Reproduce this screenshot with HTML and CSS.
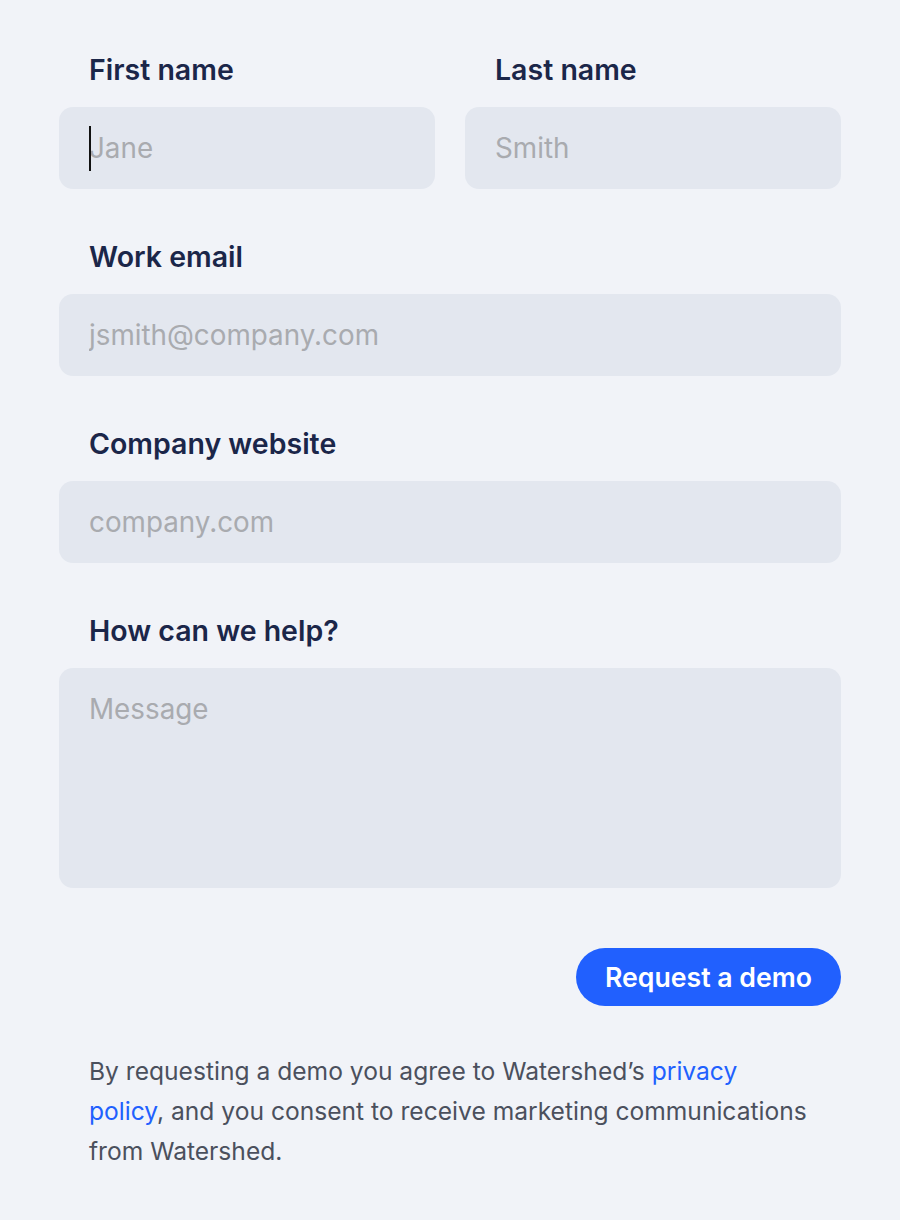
FILE: index.html
```html
<!DOCTYPE html>
<html lang="en">
<head>
<meta charset="utf-8">
<title>Request a demo</title>
<link rel="stylesheet" href="styles.css">
</head>
<body>
<form class="form">
  <div class="row">
    <div class="field">
      <label class="label" for="fn">First name</label>
      <div class="input-wrap">
        <input class="input" id="fn" type="text" placeholder="Jane">
        <span class="caret"></span>
      </div>
    </div>
    <div class="field">
      <label class="label" for="ln">Last name</label>
      <input class="input" id="ln" type="text" placeholder="Smith">
    </div>
  </div>
  <div class="field">
    <label class="label" for="em">Work email</label>
    <input class="input" id="em" type="email" placeholder="jsmith@company.com">
  </div>
  <div class="field">
    <label class="label" for="web">Company website</label>
    <input class="input" id="web" type="text" placeholder="company.com">
  </div>
  <div class="field">
    <label class="label" for="msg">How can we help?</label>
    <textarea class="input textarea" id="msg" placeholder="Message"></textarea>
  </div>
  <div class="actions">
    <button class="button" type="button">Request a demo</button>
  </div>
  <p class="legal">By requesting a demo you agree to Watershed’s <a class="link" href="#">privacy policy</a>, and you consent to receive marketing communications from Watershed.</p>
</form>
</body>
</html>
```
FILE: styles.css
```css
* { box-sizing: border-box; }
html, body {
  margin: 0;
  background: #f1f3f8;
}
body {
  font-family: Inter, "Noto Sans", "Liberation Sans", sans-serif;
}
.form {
  padding: 53px 59px 40px;
  display: flex;
  flex-direction: column;
}
.row {
  display: grid;
  grid-template-columns: 1fr 1fr;
  column-gap: 30px;
}
.field {
  display: flex;
  flex-direction: column;
  margin-bottom: 51px;
}
.label {
  display: block;
  padding-left: 30px;
  font-size: 28.5px;
  line-height: 34px;
  font-weight: 600;
  color: #1b2649;
  margin-bottom: 20px;
}
.input-wrap { position: relative; }
.input {
  display: block;
  width: 100%;
  height: 82px;
  border: none;
  outline: none;
  border-radius: 14px;
  background: #e3e7ef;
  padding: 0 30px;
  font-family: inherit;
  font-size: 27.8px;
  color: #1b2649;
}
.input::placeholder { color: #a9abaf; }
.textarea {
  height: 220px;
  padding: 26px 30px;
  line-height: 30px;
  resize: none;
}
.caret {
  position: absolute;
  left: 30px;
  top: 19px;
  width: 2px;
  height: 45px;
  background: #111;
}
.actions {
  display: flex;
  justify-content: flex-end;
  margin-top: 9px;
}
.button {
  width: 265px;
  height: 58px;
  border: none;
  border-radius: 29px;
  background: #2160fe;
  color: #fff;
  font-family: inherit;
  font-size: 26.7px;
  font-weight: 600;
  cursor: pointer;
}
.legal {
  margin: 45px 0 0;
  padding: 0 26px 0 30px;
  font-size: 24.6px;
  line-height: 40px;
  color: #4b505d;
}
.link {
  color: #2160fe;
  text-decoration: none;
}
```
